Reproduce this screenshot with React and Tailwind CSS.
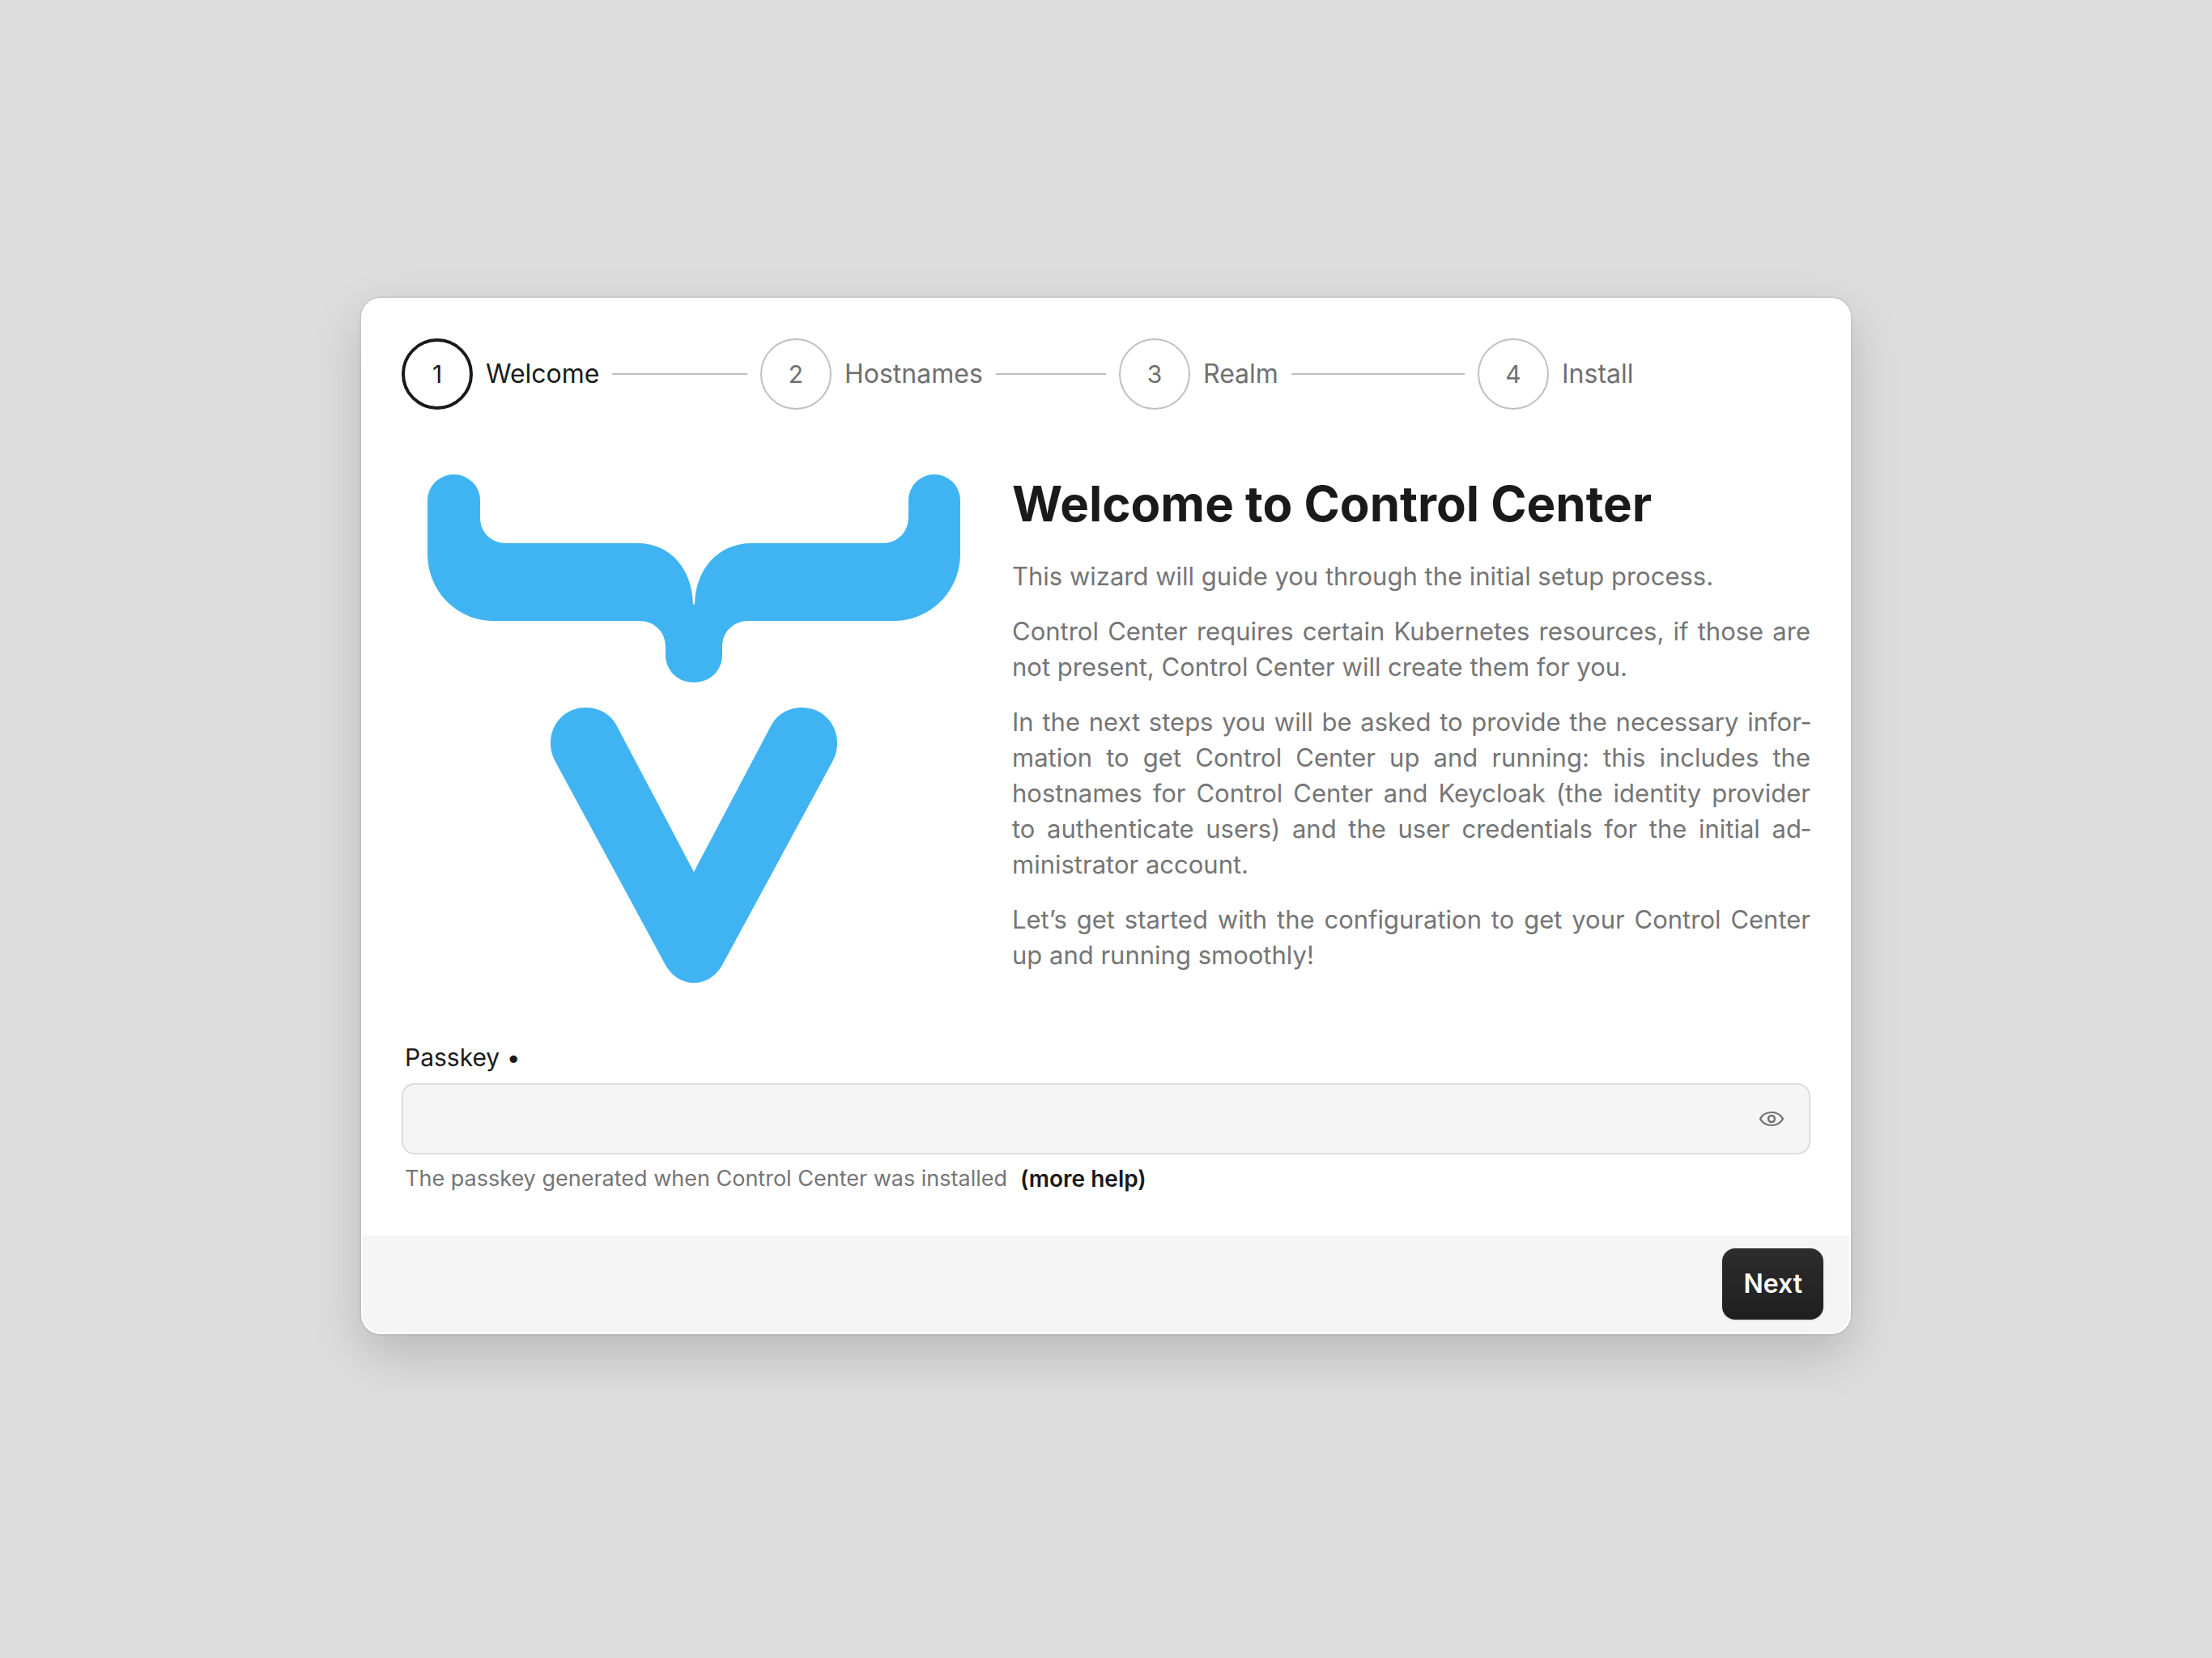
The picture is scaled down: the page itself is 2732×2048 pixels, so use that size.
const steps = ['Welcome', 'Hostnames', 'Realm', 'Install'];

function Stepper() {
  return (
    <ol className="flex gap-8">
      {steps.map((label, i) => (
        <li
          key={label}
          aria-current={i === 0 ? 'step' : undefined}
          className={`flex flex-1 items-center gap-4 ${i === 0 ? 'text-[#1a1a1a]' : 'text-[#6f6f6f]'}`}
        >
          <span
            className={`flex size-[88px] shrink-0 items-center justify-center rounded-full text-[30px] leading-none ${
              i === 0 ? 'border-4 border-[#1a1a1a]' : 'border-2 border-[#bfbfbf]'
            }`}
          >
            {i + 1}
          </span>
          <span className="text-[32px] leading-[44px]">{label}</span>
          {i < steps.length - 1 && <span className="-mr-4 h-0.5 flex-1 bg-[#bfbfbf]" />}
        </li>
      ))}
    </ol>
  );
}

function Logo() {
  return (
    <svg viewBox="0 0 658 628" className="w-[658px] max-w-full" fill="#40b4f2" role="img" aria-label="Vaadin">
      <path d="M0 32A32.500 32 0 0 1 65 32V53C65 72 79 85 98 85H260C299 85 327 116 328 160.500H330C331 116 360 85 400 85H561C580 85 594 72 594 53V32A32 32 0 0 1 658 32V98C658 144 622 181 575 181H397C378 181 364 194 364 213V223C364 243 348 257 329 257S294 243 294 223V213C294 194 280 181 261 181H82C36 181 0 144 0 98Z" />
      <path d="M195 288C211 288 225 295 233 309L329 491L425 309C433 295 447 288 463 288C487 288 506 307 506 332C506 341 504 347 500 355L363 608C355 620 344 628 329 628C314 628 303 620 295 608L158 355C154 347 152 341 152 332C152 307 171 288 195 288Z" />
    </svg>
  );
}

function EyeIcon() {
  return (
    <svg viewBox="0 0 32 20" className="h-5 w-8" fill="none" stroke="currentColor" strokeWidth="2.200">
      <path d="M2 10C5 4.500 10 2 16 2S27 4.500 30 10C27 15.500 22 18 16 18S5 15.500 2 10Z" strokeLinejoin="round" />
      <circle cx="16" cy="10" r="3.900" strokeWidth="2.500" />
    </svg>
  );
}

export default function App() {
  return (
    <div className="flex min-h-screen items-center justify-center bg-[#dddddd] pb-8 font-['Inter','Liberation_Sans',sans-serif]">
      <main className="w-full max-w-[1840px] overflow-hidden rounded-3xl border-2 border-white bg-white shadow-[0_0_0_2px_rgba(0,0,0,0.05),0_24px_60px_rgba(0,0,0,0.17)]">
        <div className="px-12 pt-12 pb-[50px]">
          <Stepper />

          <div className="grid grid-cols-[361fr_493fr] gap-8 pt-20">
            <div className="flex items-start justify-center">
              <Logo />
            </div>
            <div>
              <h1 className="text-[60px] leading-[72px] font-bold text-[#1a1a1a]">Welcome to Control Center</h1>
              <div className="flex flex-col gap-6 pt-8 text-justify text-[31px] leading-[44px] text-[#757575]">
                <p>This wizard will guide you through the initial setup process.</p>
                <p>
                  Control Center requires certain Kubernetes resources, if those are not present, Control Center will
                  create them for you.
                </p>
                <p>
                  In the next steps you will be asked to provide the necessary infor&shy;mation to get Control Center up
                  and running: this includes the hostnames for Control Center and Keycloak (the identity provider to
                  authenticate users) and the user credentials for the initial ad&shy;ministrator account.
                </p>
                <p>
                  Let’s get started with the configuration to get your Control Center up and running smoothly!
                </p>
              </div>
            </div>
          </div>

          <div className="pt-18">
            <label htmlFor="passkey" className="block px-1 text-[30px] leading-[40px] text-[#1a1a1a]">
              Passkey •
            </label>
            <div className="mt-3 flex h-[88px] items-center rounded-2xl border-2 border-[#dcdcdc] bg-[#f5f5f5] pr-[30px]">
              <input id="passkey" type="password" className="h-full min-w-0 flex-1 bg-transparent px-5 text-[32px] outline-none" />
              <button type="button" aria-label="Show password" className="text-[#6f6f6f]">
                <EyeIcon />
              </button>
            </div>
            <p className="flex gap-4 px-1 pt-2.5 text-[27px] leading-[40px] text-[#757575]">
              <span>The passkey generated when Control Center was installed</span>
              <a href="#help" className="text-[28px] font-semibold text-[#1a1a1a]">
                (more help)
              </a>
            </p>
          </div>
        </div>

        <footer className="flex justify-end bg-[#f5f5f5] px-8 py-4">
          <button
            type="button"
            className="h-[88px] rounded-2xl bg-linear-to-b from-[#2d2d2d] to-[#1f1f1f] px-[26px] text-[32px] font-semibold text-white shadow-sm"
          >
            Next
          </button>
        </footer>
      </main>
    </div>
  );
}
